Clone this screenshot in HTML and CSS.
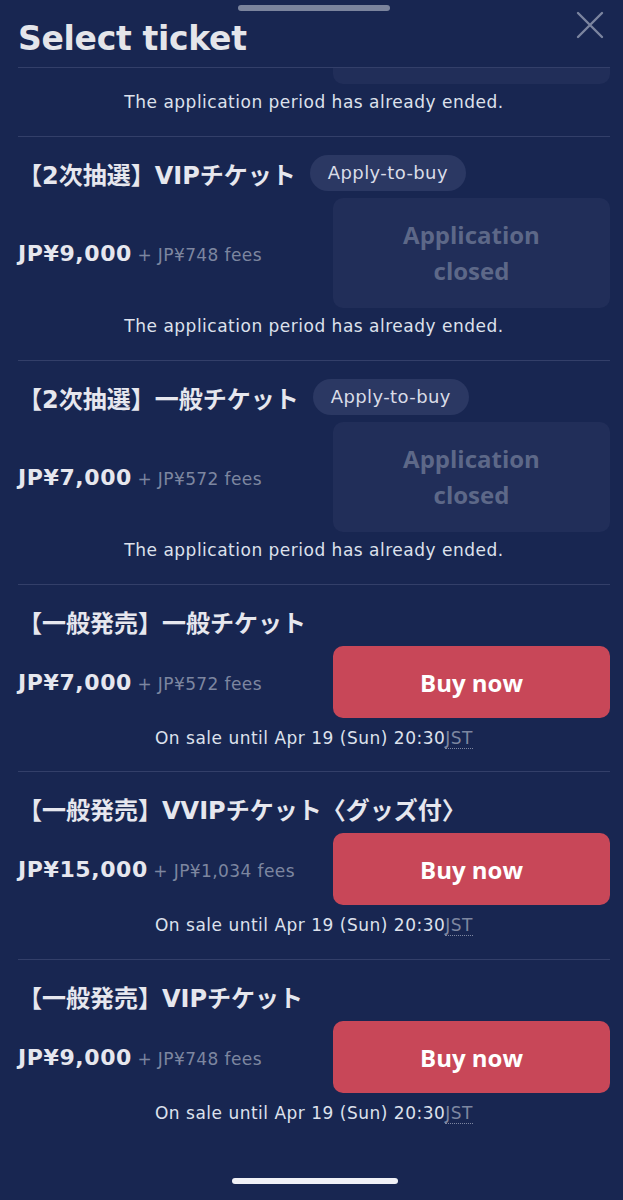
FILE: index.html
```html
<!DOCTYPE html>
<html lang="ja">
<head>
    <meta charset="UTF-8">
    <meta name="viewport" content="width=device-width, initial-scale=1.0">
    <title>Select ticket</title>
    <link rel="stylesheet" href="styles.css">
</head>
<body>

<div class="sheet">
    <!-- header -->
    <div class="header">
        <div class="handle"></div>
        <div class="header-row">
            <h1>Select ticket</h1>
            <button class="close" aria-label="Close">
                <svg width="28" height="28" viewBox="0 0 28 28">
                    <path d="M2 2 L26 26 M26 2 L2 26" stroke="#7c859f" stroke-width="2.4" stroke-linecap="round"/>
                </svg>
            </button>
        </div>
    </div>

    <!-- ticket list -->
    <div class="list">
        <div class="ticket ticket-closed ticket-cut">
            <div class="cut-row"><div class="cut-btn"></div></div>
            <p class="note">The application period has already ended.</p>
        </div>

        <div class="ticket ticket-closed">
            <div class="name-row">
                <span class="name">【2次抽選】VIPチケット</span>
                <span class="badge">Apply-to-buy</span>
            </div>
            <div class="buy-row">
                <div class="price"><b>JP¥9,000</b> <span class="fees">+ JP¥748 fees</span></div>
                <div class="btn btn-closed">Application<br>closed</div>
            </div>
            <p class="note">The application period has already ended.</p>
        </div>

        <div class="ticket ticket-closed">
            <div class="name-row">
                <span class="name">【2次抽選】一般チケット</span>
                <span class="badge">Apply-to-buy</span>
            </div>
            <div class="buy-row">
                <div class="price"><b>JP¥7,000</b> <span class="fees">+ JP¥572 fees</span></div>
                <div class="btn btn-closed">Application<br>closed</div>
            </div>
            <p class="note">The application period has already ended.</p>
        </div>

        <div class="ticket">
            <div class="name-row">
                <span class="name">【一般発売】一般チケット</span>
            </div>
            <div class="buy-row">
                <div class="price"><b>JP¥7,000</b> <span class="fees">+ JP¥572 fees</span></div>
                <button class="btn btn-buy">Buy now</button>
            </div>
            <p class="note">On sale until Apr 19 (Sun) 20:30<abbr title="Japan Standard Time">JST</abbr></p>
        </div>

        <div class="ticket ticket-tall">
            <div class="name-row">
                <span class="name">【一般発売】VVIPチケット〈グッズ付〉</span>
            </div>
            <div class="buy-row">
                <div class="price"><b>JP¥15,000</b> <span class="fees">+ JP¥1,034 fees</span></div>
                <button class="btn btn-buy">Buy now</button>
            </div>
            <p class="note">On sale until Apr 19 (Sun) 20:30<abbr title="Japan Standard Time">JST</abbr></p>
        </div>

        <div class="ticket ticket-last">
            <div class="name-row">
                <span class="name">【一般発売】VIPチケット</span>
            </div>
            <div class="buy-row">
                <div class="price"><b>JP¥9,000</b> <span class="fees">+ JP¥748 fees</span></div>
                <button class="btn btn-buy">Buy now</button>
            </div>
            <p class="note">On sale until Apr 19 (Sun) 20:30<abbr title="Japan Standard Time">JST</abbr></p>
        </div>
    </div>

    <div class="home-bar"></div>
</div>

</body>
</html>
```

FILE: styles.css
```css
body {
    font-family: "DejaVu Sans", "Noto Sans CJK JP", sans-serif;
    background-color: #182651;
    color: #e4e6ee;
    margin: 0;
    padding: 0;
}
.sheet {
    width: 623px;
    height: 1200px;
    display: flex;
    flex-direction: column;
    overflow: hidden;
}
.header {
    padding: 5px 13px 0 18px;
}
.handle {
    width: 152px;
    height: 6px;
    margin: 0 auto 0 220px;
    background-color: #7b849d;
    border-radius: 3px;
}
.header-row {
    display: flex;
    justify-content: space-between;
    align-items: flex-start;
    border-bottom: 1px solid #333f69;
    height: 56px;
}
h1 {
    margin: 8px 0 0;
    font-size: 33px;
    font-weight: 700;
    letter-spacing: -0.3px;
    color: #e4e5ea;
    line-height: 40px;
}
.close {
    background: none;
    border: none;
    padding: 0;
    margin: 0 6px 0 0;
    cursor: pointer;
}
.list {
    padding: 0 13px 0 18px;
}
.ticket {
    border-bottom: 1px solid #333f69;
    padding: 18px 0 21px;
}
.ticket-closed {
    padding-bottom: 22px;
}
.ticket-tall {
    padding-bottom: 22px;
}
.ticket-cut {
    padding-top: 0;
}
.ticket-last {
    border-bottom: none;
}
.cut-row {
    display: flex;
    justify-content: flex-end;
}
.cut-btn {
    width: 277px;
    height: 16px;
    background-color: #212e59;
    border-radius: 0 0 10px 10px;
}
.name-row {
    display: flex;
    align-items: center;
    gap: 14px;
    height: 36px;
}
.name {
    font-size: 24px;
    font-weight: 700;
    color: #e6e7ee;
}
.badge {
    display: inline-block;
    padding: 0 18px;
    height: 36px;
    line-height: 36px;
    border-radius: 18px;
    background-color: #2b3863;
    font-size: 18px;
    letter-spacing: 0.4px;
    color: #d9dce7;
}
.buy-row {
    display: flex;
    justify-content: space-between;
    align-items: center;
    margin-top: 7px;
}
.price {
    font-size: 17px;
}
.price b {
    font-size: 22px;
    font-weight: 700;
    letter-spacing: 0.6px;
    color: #e6e7ee;
}
.fees {
    color: #7d86a0;
    letter-spacing: 0.4px;
}
.btn {
    width: 277px;
    border: none;
    border-radius: 10px;
    font-family: "Open Sans", sans-serif;
    font-size: 24px;
    font-weight: 700;
    text-align: center;
    display: flex;
    align-items: center;
    justify-content: center;
}
.btn-closed {
    height: 110px;
    background-color: #212e59;
    color: #5d6888;
    line-height: 36px;
}
.btn-buy {
    height: 72px;
    background-color: #c84758;
    color: #ffffff;
    cursor: pointer;
}
.note {
    margin: 8px 0 0;
    text-align: center;
    font-size: 17px;
    line-height: 24px;
    letter-spacing: 0.5px;
    color: #dde1ec;
}
.ticket-closed .note {
    margin-top: 6px;
}
abbr {
    text-decoration: none;
    border-bottom: 1px dotted #7d86a0;
    color: #7d86a0;
}
.home-bar {
    width: 166px;
    height: 6px;
    border-radius: 3px;
    background-color: #f0f1f6;
    margin: auto auto 16px 232px;
}
```
